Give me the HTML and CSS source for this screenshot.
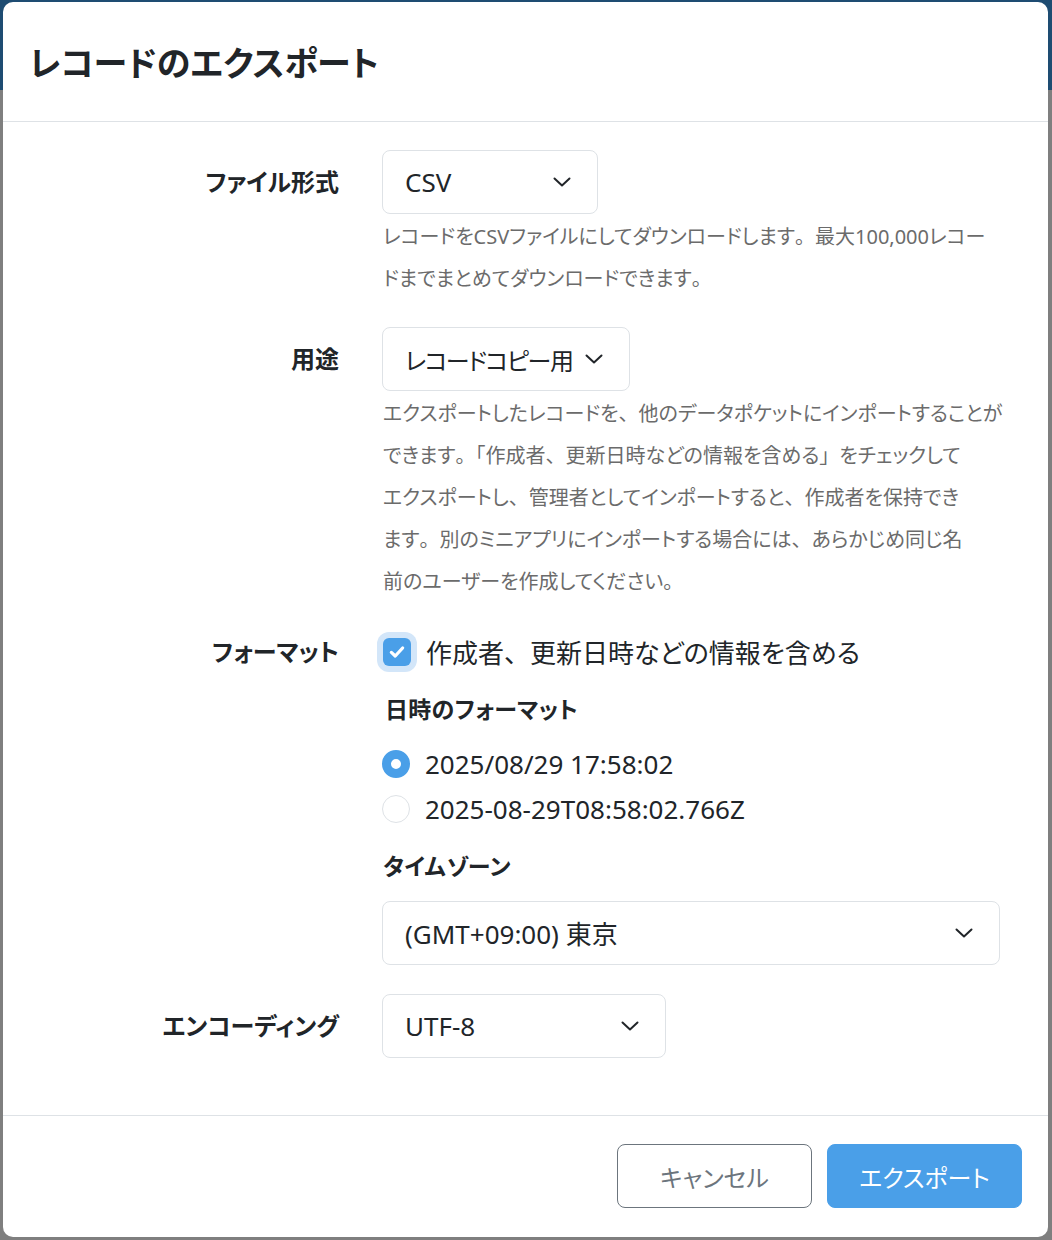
FILE: index.html
```html
<!DOCTYPE html>
<html lang="ja">
<head>
<meta charset="utf-8">
<title>レコードのエクスポート</title>
<link rel="stylesheet" href="styles.css">
</head>
<body>
<div class="modal">
  <div class="modal-header">
    <h1 class="modal-title">レコードのエクスポート</h1>
  </div>
  <div class="modal-body">
    <div class="row row-first">
      <div class="label label-select">ファイル形式</div>
      <div class="control">
        <div class="select select-csv"><span>CSV</span><svg class="chev" viewBox="0 0 18 10"><path d="M1.5 1.5 9 8.5 16.5 1.5"/></svg></div>
        <p class="help">レコードをCSVファイルにしてダウンロードします<span class="zp">。</span>最大100,000レコー<br>ドまでまとめてダウンロードできます<span class="zp">。</span></p>
      </div>
    </div>
    <div class="row">
      <div class="label label-select">用途</div>
      <div class="control">
        <div class="select select-use"><span class="tight">レコードコピー用</span><svg class="chev" viewBox="0 0 18 10"><path d="M1.5 1.5 9 8.5 16.5 1.5"/></svg></div>
        <p class="help">エクスポートしたレコードを<span class="zp">、</span>他のデータポケットにインポートすることが<br>できます<span class="zp">。「</span>作成者<span class="zp">、</span>更新日時などの情報を含める<span class="zp">」</span>をチェックして<br>エクスポートし<span class="zp">、</span>管理者としてインポートすると<span class="zp">、</span>作成者を保持でき<br>ます<span class="zp">。</span>別のミニアプリにインポートする場合には<span class="zp">、</span>あらかじめ同じ名<br>前のユーザーを作成してください<span class="zp">。</span></p>
      </div>
    </div>
    <div class="row">
      <div class="label label-line">フォーマット</div>
      <div class="control">
        <label class="check-line">
          <span class="checkbox"><svg viewBox="0 0 16 16"><path d="M3.5 8.3 6.6 11.2 12.5 4.8"/></svg></span>
          <span>作成者<span class="zp">、</span>更新日時などの情報を含める</span>
        </label>
        <div class="subhead subhead-date">日時のフォーマット</div>
        <label class="radio-line"><span class="radio checked"></span><span>2025/08/29 17:58:02</span></label>
        <label class="radio-line"><span class="radio"></span><span>2025-08-29T08:58:02.766Z</span></label>
        <div class="subhead subhead-tz">タイムゾーン</div>
        <div class="select select-tz"><span>(GMT+09:00) 東京</span><svg class="chev" viewBox="0 0 18 10"><path d="M1.5 1.5 9 8.5 16.5 1.5"/></svg></div>
      </div>
    </div>
    <div class="row row-enc">
      <div class="label label-select">エンコーディング</div>
      <div class="control">
        <div class="select select-enc"><span>UTF-8</span><svg class="chev" viewBox="0 0 18 10"><path d="M1.5 1.5 9 8.5 16.5 1.5"/></svg></div>
      </div>
    </div>
  </div>
  <div class="modal-footer">
    <button class="btn btn-cancel">キャンセル</button>
    <button class="btn btn-primary">エクスポート</button>
  </div>
</div>
</body>
</html>
```
FILE: styles.css
```css
* { box-sizing: border-box; }
html, body { margin: 0; padding: 0; }
body {
  width: 1052px;
  height: 1240px;
  overflow: hidden;
  background: linear-gradient(to bottom, #1e4c72 0, #1e4c72 90px, #7f7f7f 90px, #7f7f7f 100%);
  font-family: "Noto Sans", "Noto Sans CJK JP", sans-serif;
  font-feature-settings: "palt";
  color: #212529;
}
.zp { font-feature-settings: normal; }
.modal {
  margin: 2px 4px 0 3px;
  width: 1045px;
  height: 1235px;
  background: #fff;
  border-radius: 10px;
  display: flex;
  flex-direction: column;
}
.modal-header {
  height: 120px;
  border-bottom: 1px solid #dee2e6;
  display: flex;
  align-items: center;
  padding-left: 26px;
}
.modal-title {
  margin: 0;
  font-size: 34px;
  font-weight: 700;
  color: #212529;
}
.modal-body {
  flex: 1;
  padding: 28px 48px 0 0;
}
.row {
  display: grid;
  grid-template-columns: 336px 1fr;
  column-gap: 43px;
  margin-top: 27px;
}
.row-first { margin-top: 0; }
.row-enc { margin-top: 29px; }
.label {
  text-align: right;
  font-size: 24px;
  font-weight: 700;
}
.label-select { line-height: 64px; }
.label-line { line-height: 44px; }
.control { min-width: 0; }
.select {
  height: 64px;
  border: 1px solid #dee2e6;
  border-radius: 8px;
  display: flex;
  align-items: center;
  justify-content: space-between;
  padding: 0 26px 0 22px;
  font-size: 26px;
  white-space: nowrap;
}
.tight { font-size: 24px; letter-spacing: -1.5px; }
.select-csv { width: 216px; }
.select-use { width: 248px; }
.select-tz { width: 618px; margin-top: 17px; }
.select-enc { width: 284px; }
.chev {
  flex: none;
  width: 18px;
  height: 10px;
  fill: none;
  stroke: #212529;
  stroke-width: 2;
  stroke-linecap: round;
  stroke-linejoin: round;
}
.help {
  margin: 2px 0 0 1px;
  font-size: 20px;
  line-height: 42px;
  color: #6b6b6b;
  white-space: nowrap;
}
.check-line {
  display: flex;
  align-items: center;
  height: 44px;
  font-size: 26px;
}
.checkbox {
  flex: none;
  width: 28px;
  height: 28px;
  border-radius: 6px;
  background: #4a9fe8;
  box-shadow: 0 0 0 6px #d3e6f9;
  margin: 0 15px 0 1px;
  display: flex;
  align-items: center;
  justify-content: center;
}
.checkbox svg {
  width: 20px;
  height: 20px;
  fill: none;
  stroke: #fff;
  stroke-width: 2.6;
  stroke-linecap: round;
  stroke-linejoin: round;
}
.subhead {
  font-size: 23px;
  font-weight: 700;
  line-height: 36px;
  letter-spacing: 0.3px;
}
.subhead-date { margin-top: 17px; padding-left: 3px; margin-bottom: 14px; }
.subhead-tz { margin-top: 17px; padding-left: 1px; }
.radio-line {
  display: flex;
  align-items: center;
  height: 45px;
  font-size: 26px;
}
.radio {
  flex: none;
  width: 28px;
  height: 28px;
  border-radius: 50%;
  border: 1px solid #dee2e6;
  background: #fff;
  margin-right: 15px;
}
.radio.checked {
  border: 9px solid #4a9fe8;
}
.modal-footer {
  height: 122px;
  border-top: 1px solid #dee2e6;
  display: flex;
  justify-content: flex-end;
  align-items: flex-start;
  gap: 15px;
  padding: 28px 26px 0 0;
}
.btn {
  width: 195px;
  height: 64px;
  border-radius: 8px;
  font-family: "Noto Sans", "Noto Sans CJK JP", sans-serif;
  font-feature-settings: "palt";
  font-size: 24px;
  cursor: pointer;
}
.btn-cancel {
  background: #fff;
  border: 1px solid #6c757d;
  color: #6c757d;
}
.btn-primary {
  background: #4a9fe8;
  border: 1px solid #4a9fe8;
  color: #fff;
}
```
